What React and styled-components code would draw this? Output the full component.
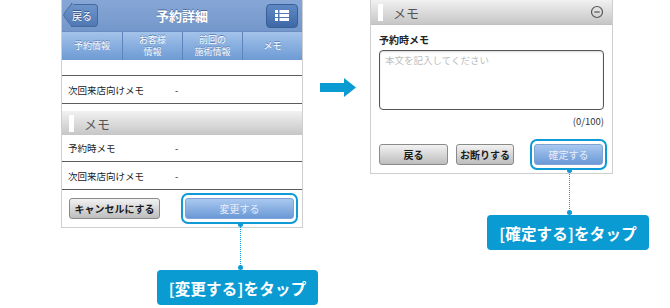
import React from 'react';
import styled, { createGlobalStyle } from 'styled-components';

const GlobalStyle = createGlobalStyle`
  html, body { margin: 0; padding: 0; background: #fff; }
  body { font-family: "Noto Sans CJK JP", "Liberation Sans", sans-serif; }
`;

const Page = styled.div`
  width: 670px;
  height: 308px;
  display: flex;
  align-items: flex-start;
  padding-left: 61px;
  box-sizing: border-box;
  overflow: hidden;
`;

const Column = styled.div`
  display: flex;
  flex-direction: column;
  width: ${p => p.$width}px;
  margin-left: ${p => p.$offset || 0}px;
`;

const Phone = styled.div`
  border: 1px solid #cfcfcf;
  border-top: none;
  background: #fff;
`;

const Header = styled.div`
  height: 31px;
  display: flex;
  align-items: center;
  justify-content: space-between;
  padding: 0 4px 0 3px;
  background: linear-gradient(#86a7d6, #7497cb);
  position: relative;
`;

const Title = styled.div`
  position: absolute;
  left: 0;
  right: 0;
  text-align: center;
  color: #fff;
  font-size: 13px;
  font-weight: bold;
  text-shadow: 0 -1px 0 #4a6a9a;
  pointer-events: none;
`;

const BackButton = styled.div`
  position: relative;
  margin-left: 6px;
  width: 26px;
  height: 21px;
  background: linear-gradient(#6f95cb, #4f78b3);
  border: 1px solid #46699c;
  border-left: none;
  border-radius: 0 4px 4px 0;
  color: #fff;
  font-size: 10px;
  display: flex;
  align-items: center;
  justify-content: center;
  text-shadow: 0 -1px 0 #2f4f80;
  &::before {
    content: '';
    position: absolute;
    left: -7px;
    top: 2px;
    width: 15px;
    height: 15px;
    background: linear-gradient(135deg, #6f95cb, #4f78b3);
    border-left: 1px solid #46699c;
    border-bottom: 1px solid #46699c;
    transform: rotate(45deg) skew(8deg, 8deg);
    border-radius: 0 0 0 3px;
    z-index: 0;
  }
  span { position: relative; z-index: 1; margin-left: -4px; }
`;

const MenuButton = styled.div`
  width: 30px;
  height: 22px;
  border-radius: 4px;
  background: linear-gradient(#5f89c4, #3f69a6);
  border: 1px solid #3a5f94;
  display: flex;
  align-items: center;
  justify-content: center;
`;

const Tabs = styled.div`
  height: 29px;
  display: grid;
  grid-template-columns: repeat(4, 1fr);
  background: linear-gradient(#a3c3ea, #6d9ad4);
  border-top: 1px solid #6a8cc0;
  box-sizing: border-box;
`;

const Tab = styled.div`
  display: flex;
  flex-direction: column;
  align-items: center;
  justify-content: center;
  text-align: center;
  color: #fff;
  font-size: 9px;
  line-height: 12px;
  text-shadow: 0 -1px 0 #5a7fb5;
  & + & { border-left: 1px solid #5f84bb; }
`;

const Row = styled.div`
  height: ${p => p.$h || 27}px;
  display: flex;
  align-items: center;
  padding-left: 6px;
  font-size: 9.5px;
  color: #222;
  border-bottom: 1.5px solid #5c5c5c;
  box-sizing: border-box;
`;

const RowLabel = styled.span`
  width: 107px;
`;

const SectionHead = styled.div`
  height: 24px;
  margin-top: ${p => p.$mt || 0}px;
  display: flex;
  align-items: center;
  padding: 0 8px 0 7px;
  background: linear-gradient(#f1f1f1, #c6c6c6);
  color: #555;
  font-size: 13px;
  border-bottom: ${p => (p.$line ? '1px solid #c0c0c0' : 'none')};
  &::before {
    content: '';
    width: 5px;
    height: 17px;
    background: #fff;
    margin-right: 10px;
  }
`;

const HeadText = styled.span`
  flex: 1;
`;

const ButtonBar = styled.div`
  display: flex;
  gap: ${p => p.$gap || 0}px;
  padding: ${p => p.$pad};
`;

const Button = styled.div`
  position: relative;
  width: ${p => p.$w}px;
  height: 21px;
  border-radius: 3px;
  display: flex;
  align-items: center;
  justify-content: center;
  font-size: 10px;
  font-weight: bold;
  box-sizing: border-box;
  ${p => (p.$push ? 'margin-left: auto;' : '')}
  ${p =>
    p.$primary
      ? `
    background: linear-gradient(#a9c8ef, #6b99d6);
    border: 1px solid #7fa3d6;
    color: #e6eefa;
    font-weight: normal;
  `
      : `
    background: linear-gradient(#f2f2f2, #bdbdbd);
    border: 1px solid #8a8a8a;
    color: #1a1a1a;
  `}
`;

const Ring = styled.div`
  position: absolute;
  inset: -6px -5px -6px -5px;
  border: 2px solid #0e9ad6;
  border-radius: 7px;
  pointer-events: none;
`;

const Connector = styled.div`
  position: absolute;
  left: 50%;
  top: calc(100% + 6px);
  height: ${p => p.$h}px;
  border-left: 1px dotted #0e9ad6;
  &::before, &::after {
    content: '';
    position: absolute;
    left: -3px;
    width: 5px;
    height: 5px;
    border-radius: 50%;
    background: #0e9ad6;
  }
  &::before { top: -2px; }
  &::after { bottom: -2px; }
`;

const Callout = styled.div`
  margin-left: ${p => p.$ml}px;
  margin-top: ${p => p.$mt}px;
  width: ${p => p.$w}px;
  height: 35px;
  background: #0a9bd3;
  border-radius: 4px;
  color: #fff;
  font-size: 15.5px;
  font-weight: bold;
  display: flex;
  align-items: center;
  justify-content: center;
  letter-spacing: 0.2px;
`;

const Arrow = styled.div`
  margin-left: 17px;
  margin-top: 78px;
  width: 36px;
  height: 19px;
`;

const Body = styled.div`
  padding: 7px 8px 0 8px;
`;

const FieldLabel = styled.div`
  font-size: 10px;
  font-weight: bold;
  color: #222;
  height: 18px;
  line-height: 16px;
`;

const TextArea = styled.div`
  height: 60px;
  border: 1px solid #555;
  border-radius: 4px;
  box-sizing: border-box;
  padding: 2px 5px;
  font-size: 9.5px;
  color: #bcbcbc;
  box-shadow: inset 0 1px 2px rgba(0, 0, 0, 0.15);
`;

const Count = styled.div`
  text-align: right;
  font-size: 9.5px;
  color: #333;
  margin-top: 4px;
`;

const MenuIcon = () => (
  <svg width="14" height="11" viewBox="0 0 14 11">
    {[0, 4, 8].map(y => (
      <g key={y} fill="#fff">
        <rect x="0" y={y} width="3" height="3" />
        <rect x="4.5" y={y} width="9.5" height="3" />
      </g>
    ))}
  </svg>
);

const MinusCircle = () => (
  <svg width="14" height="14" viewBox="0 0 14 14">
    <circle cx="7" cy="7" r="5.5" fill="none" stroke="#555" strokeWidth="1.2" />
    <line x1="4.3" y1="7" x2="9.7" y2="7" stroke="#555" strokeWidth="1.2" />
  </svg>
);

export default function App() {
  return (
    <Page>
      <GlobalStyle />
      <Column $width={242}>
        <Phone>
          <Header>
            <BackButton>
              <span>戻る</span>
            </BackButton>
            <Title>予約詳細</Title>
            <MenuButton>
              <MenuIcon />
            </MenuButton>
          </Header>
          <Tabs>
            <Tab>予約情報</Tab>
            <Tab>
              <span>お客様</span>
              <span>情報</span>
            </Tab>
            <Tab>
              <span>前回の</span>
              <span>施術情報</span>
            </Tab>
            <Tab>メモ</Tab>
          </Tabs>
          <Row $h={16} />
          <Row $h={28}>
            <RowLabel>次回来店向けメモ</RowLabel>-
          </Row>
          <SectionHead $mt={7}>
            <HeadText>メモ</HeadText>
          </SectionHead>
          <Row $h={27}>
            <RowLabel>予約時メモ</RowLabel>-
          </Row>
          <Row $h={28}>
            <RowLabel>次回来店向けメモ</RowLabel>-
          </Row>
          <ButtonBar $pad="8px 8px 8px 7px">
            <Button $w={91}>キャンセルにする</Button>
            <Button $w={109} $primary $push>
              変更する
              <Ring />
              <Connector $h={44} />
            </Button>
          </ButtonBar>
        </Phone>
        <Callout $ml={96} $mt={42} $w={161}>
          [変更する]をタップ
        </Callout>
      </Column>
      <Arrow>
        <svg width="36" height="19" viewBox="0 0 36 19">
          <polygon points="0,5 24,5 24,0 36,9.5 24,19 24,14 0,14" fill="#0a9bd3" />
        </svg>
      </Arrow>
      <Column $width={243} $offset={14}>
        <Phone>
          <SectionHead $line>
            <HeadText>メモ</HeadText>
            <MinusCircle />
          </SectionHead>
          <Body>
            <FieldLabel>予約時メモ</FieldLabel>
            <TextArea>本文を記入してください</TextArea>
            <Count>(0/100)</Count>
          </Body>
          <ButtonBar $gap={8} $pad="16px 9px 8px 8px">
            <Button $w={69}>戻る</Button>
            <Button $w={58}>お断りする</Button>
            <Button $w={69} $primary $push>
              確定する
              <Ring />
              <Connector $h={43} />
            </Button>
          </ButtonBar>
        </Phone>
        <Callout $ml={117} $mt={41} $w={162}>
          [確定する]をタップ
        </Callout>
      </Column>
    </Page>
  );
}
